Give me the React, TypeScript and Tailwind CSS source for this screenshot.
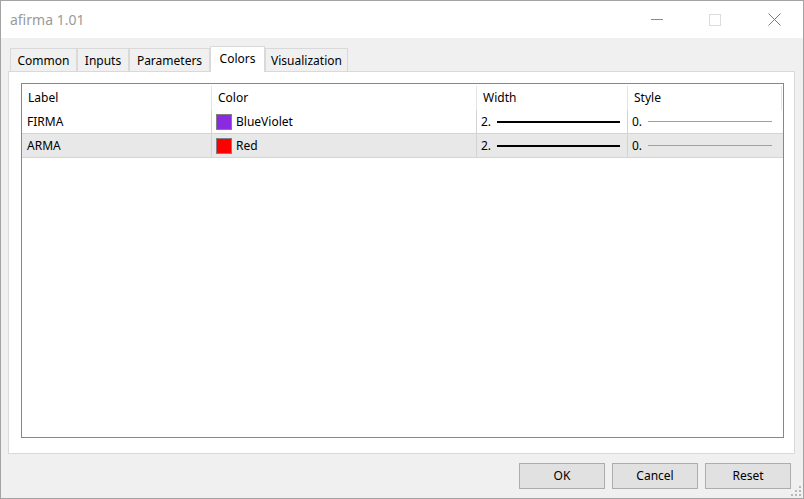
import React from 'react';

type Row = { label: string; color: string; colorName: string; width: string; style: string };

const rows: Row[] = [
  { label: 'FIRMA', color: '#8a2be2', colorName: 'BlueViolet', width: '2.', style: '0.' },
  { label: 'ARMA', color: '#ff0000', colorName: 'Red', width: '2.', style: '0.' },
];

const tabs = [
  { name: 'Common', w: 'w-[67px]' },
  { name: 'Inputs', w: 'w-[52px]' },
  { name: 'Parameters', w: 'w-[81px]' },
  { name: 'Colors', w: 'w-[55px]' },
  { name: 'Visualization', w: 'w-[83px]' },
];

function TitleBar() {
  return (
    <div className="h-[37px] bg-white flex items-center shrink-0">
      <span className="ml-[9px] text-[14px] text-[#9a9a9a] mb-[1px]">afirma 1.01</span>
      <div className="ml-auto flex items-center h-full pr-[22px]">
        <div className="w-[12px] h-[1px] bg-[#8a8a8a]" />
        <div className="ml-[46px] w-[12px] h-[12px] border border-[#dcdcdc]" />
        <svg width="13" height="13" viewBox="0 0 13 13" className="ml-[47px]">
          <path d="M0.5 0.5 L12.5 12.5 M12.5 0.5 L0.5 12.5" stroke="#7a7a7a" strokeWidth="1" />
        </svg>
      </div>
    </div>
  );
}

function Tabs() {
  return (
    <div className="flex items-end h-[25px] pl-[2px]">
      {tabs.map((t) => {
        const active = t.name === 'Colors';
        return active ? (
          <div
            key={t.name}
            className={`${t.w} h-[26px] bg-white border border-b-0 border-[#d9d9d9] flex items-start justify-center pt-[3px] -mb-[1px] relative z-10`}
          >
            {t.name}
          </div>
        ) : (
          <div
            key={t.name}
            className={`${t.w} h-[23px] bg-[#f0f0f0] border border-b-0 border-[#d9d9d9] flex items-center justify-center pt-[2px]`}
          >
            {t.name}
          </div>
        );
      })}
    </div>
  );
}

function Cell({ className, children }: { className: string; children?: React.ReactNode }) {
  return <div className={`flex items-center h-full ${className}`}>{children}</div>;
}

function ColorsTable() {
  return (
    <div className="flex-1 border border-[#828790] bg-white flex flex-col">
      <div className="flex h-[26px] shrink-0 pt-[2px]">
        <Cell className="w-[190px] pl-[6px] border-r border-[#e5e5e5]">Label</Cell>
        <Cell className="w-[265px] pl-[6px] border-r border-[#e5e5e5]">Color</Cell>
        <Cell className="w-[151px] pl-[6px] border-r border-[#e5e5e5]">Width</Cell>
        <Cell className="w-[154px] pl-[6px] border-r border-[#e5e5e5]">Style</Cell>
      </div>
      {rows.map((r, i) => (
        <div
          key={r.label}
          className={`flex h-[24px] border-b border-[#d4d4d4] ${i === 1 ? 'bg-[#e8e8e8]' : 'bg-white'}`}
        >
          <Cell className="w-[190px] pl-[5px] border-r border-[#d4d4d4]">{r.label}</Cell>
          <Cell className="w-[265px] pl-[4px] border-r border-[#d4d4d4] gap-[4px]">
            <span className="w-[16px] h-[16px] border border-[#808080]" style={{ backgroundColor: r.color }} />
            <span>{r.colorName}</span>
          </Cell>
          <Cell className="w-[151px] pl-[4px] border-r border-[#d4d4d4]">
            <span className="w-[16px]">{r.width}</span>
            <span className="w-[123px] h-[2px] bg-black" />
          </Cell>
          <Cell className="w-[154px] pl-[4px]">
            <span className="w-[16px]">{r.style}</span>
            <span className="w-[124px] h-[1px] bg-[#a0a0a0]" />
          </Cell>
        </div>
      ))}
    </div>
  );
}

function Grip() {
  const dots = [
    [8, 0],
    [4, 4],
    [8, 4],
    [0, 8],
    [4, 8],
    [8, 8],
  ];
  return (
    <svg width="11" height="11" viewBox="0 0 11 11" className="absolute right-[1px] bottom-[1px]">
      {dots.map(([x, y], i) => (
        <rect key={i} x={x} y={y} width="2" height="2" fill="#b8b8b8" />
      ))}
    </svg>
  );
}

export default function App() {
  return (
    <div
      className="w-[804px] h-[499px] border border-[#a3a3a3] bg-[#f0f0f0] flex flex-col relative text-[12px] text-black"
      style={{ fontFamily: '"Noto Sans", "Open Sans", Arial, sans-serif' }}
    >
      <TitleBar />
      <div className="flex-1 flex flex-col pt-[8px] pl-[7px] pr-[8px]">
        <Tabs />
        <div className="h-[383px] border border-[#d9d9d9] bg-white pt-[11px] pl-[12px] pr-[10px] pb-[15px] flex">
          <ColorsTable />
        </div>
        <div className="flex justify-end gap-[7px] mt-[9px] pr-[4px]">
          {['OK', 'Cancel', 'Reset'].map((b) => (
            <button
              key={b}
              className="w-[86px] h-[26px] bg-[#e1e1e1] border border-[#adadad] flex items-center justify-center"
            >
              {b}
            </button>
          ))}
        </div>
      </div>
      <Grip />
    </div>
  );
}
